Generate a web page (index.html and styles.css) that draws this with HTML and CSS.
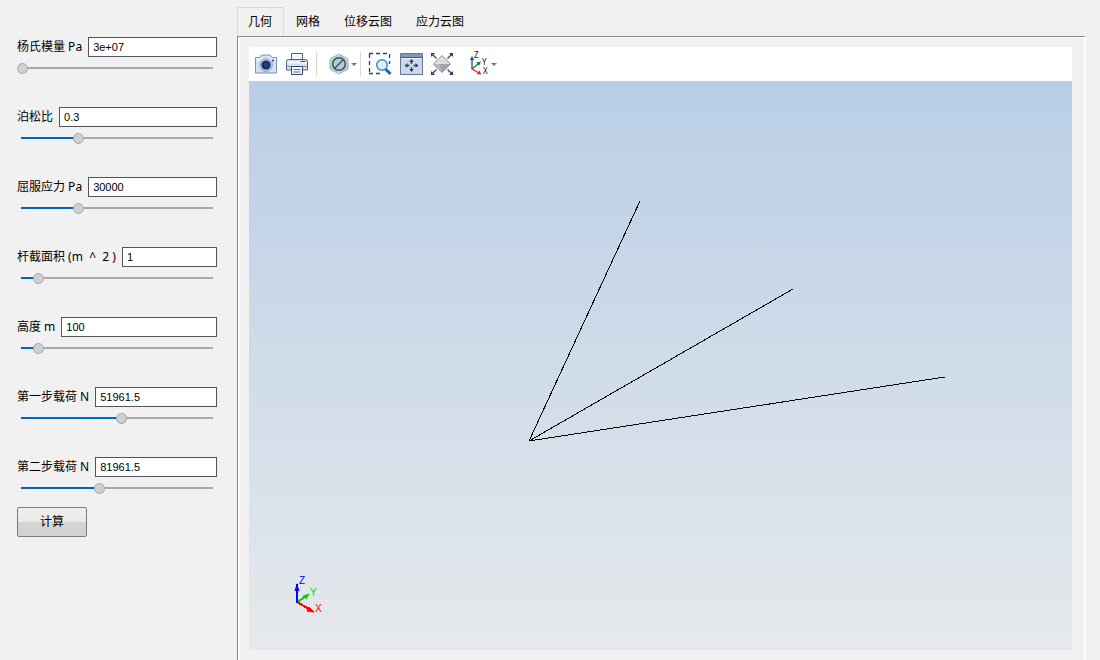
FILE: index.html
```html
<!DOCTYPE html>
<html lang="zh-CN">
<head>
<meta charset="utf-8">
<title>几何</title>
<link rel="stylesheet" href="styles.css">
</head>
<body>
<div class="app">
  <form class="params">
    <div class="field">
      <div class="field-row"><label for="young">杨氏模量 Pa</label><input class="value" id="young" type="text" value="3e+07"></div>
      <input class="slider" type="range" step="any" value="0" style="--fill: 0%" aria-label="杨氏模量">
    </div>
    <div class="field">
      <div class="field-row"><label for="poisson">泊松比</label><input class="value" id="poisson" type="text" value="0.3"></div>
      <input class="slider" type="range" step="any" value="29.6" style="--fill: 30%" aria-label="泊松比">
    </div>
    <div class="field">
      <div class="field-row"><label for="yield">屈服应力 Pa</label><input class="value" id="yield" type="text" value="30000"></div>
      <input class="slider" type="range" step="any" value="29.6" style="--fill: 30%" aria-label="屈服应力">
    </div>
    <div class="field">
      <div class="field-row"><label for="area">杆截面积 (m&nbsp; ^&nbsp; 2 )</label><input class="value" id="area" type="text" value="1"></div>
      <input class="slider" type="range" step="any" value="8.5" style="--fill: 9%" aria-label="杆截面积">
    </div>
    <div class="field">
      <div class="field-row"><label for="height">高度 m</label><input class="value" id="height" type="text" value="100"></div>
      <input class="slider" type="range" step="any" value="8.5" style="--fill: 9%" aria-label="高度">
    </div>
    <div class="field">
      <div class="field-row"><label for="load1">第一步载荷 N</label><input class="value" id="load1" type="text" value="51961.5"></div>
      <input class="slider" type="range" step="any" value="52.4" style="--fill: 52%" aria-label="第一步载荷">
    </div>
    <div class="field">
      <div class="field-row"><label for="load2">第二步载荷 N</label><input class="value" id="load2" type="text" value="81961.5"></div>
      <input class="slider" type="range" step="any" value="40.7" style="--fill: 41%" aria-label="第二步载荷">
    </div>
    <button class="compute" type="button">计算</button>
  </form>

  <main class="main">
    <div class="tabs" role="tablist">
      <button class="tab active" type="button" role="tab" aria-selected="true">几何</button>
      <button class="tab" type="button" role="tab" aria-selected="false">网格</button>
      <button class="tab" type="button" role="tab" aria-selected="false">位移云图</button>
      <button class="tab" type="button" role="tab" aria-selected="false">应力云图</button>
    </div>
    <section class="pane">
      <div class="toolbar">
        <button class="tool" type="button" aria-label="截图">
          <svg width="24" height="24" viewBox="0 0 24 24">
            <path d="M1.500 5.500h4l2-2.500h8.500l2 2.500h4.500v15.500h-21z" fill="#d3e1f2" stroke="#7d93b4"/>
            <path d="M2.500 6.500h19v2h-19z" fill="#eef4fb"/>
            <circle cx="12" cy="13" r="6.300" fill="#b4c6dd" stroke="#8fa3c0"/>
            <circle cx="12" cy="13" r="4.600" fill="#162f66"/>
            <circle cx="12" cy="13" r="2.300" fill="#25437f"/>
            <circle cx="19" cy="8.500" r="1" fill="#1f3a70"/>
          </svg>
        </button>
        <button class="tool" type="button" aria-label="打印">
          <svg width="24" height="24" viewBox="0 0 24 24">
            <path d="M6.500 9.500v-8h11v8" fill="#f7f9fc" stroke="#4c5f88"/>
            <path d="M1.500 9.500q0-2 2-2h17q2 0 2 2v8.500h-21z" fill="#d9e1ed" stroke="#4c5f88"/>
            <path d="M7 2h10v5H7z" fill="#f7f9fc"/>
            <path d="M2.500 9.500h19v2h-19z" fill="#f4f7fb"/>
            <path d="M1.500 14.500h21" stroke="#8090b0"/>
            <path d="M15.500 9.500h5" stroke="#31466f"/>
            <path d="M6.500 14.500h11v8h-11z" fill="#f8fafc" stroke="#31466f"/>
            <path d="M8.500 17.500h7M8.500 20h7" stroke="#536890"/>
          </svg>
        </button>
        <span class="divider"></span>
        <button class="tool menu" type="button" aria-label="显示">
          <svg width="20" height="24" viewBox="0 0 20 24">
            <path d="M10 2l9 5v10l-9 5-9-5V7z" fill="#bccfd4" stroke="#9db2b9"/>
            <path d="M10 2.500V21.500M1.500 7l8.500 5 8.500-5" fill="none" stroke="#d8e4e7"/>
            <circle cx="10" cy="12" r="6.300" fill="#b0ccd6" stroke="#3c5063" stroke-width="1.500"/>
            <path d="M5.500 16.500l9-9" stroke="#3c5063" stroke-width="1.500"/>
          </svg>
          <span class="caret"></span>
        </button>
        <span class="divider"></span>
        <button class="tool" type="button" aria-label="框选缩放">
          <svg width="24" height="24" viewBox="0 0 24 24">
            <path d="M1 1.500H22M1 21.500H12M1.500 2V22M21.500 2V12" fill="none" stroke="#2d4170" stroke-width="1.300" stroke-dasharray="4 3"/>
            <path d="M17.500 17l5 5" stroke="#1769b2" stroke-width="3"/>
            <circle cx="14" cy="13" r="5.300" fill="#d9effb" stroke="#4187bd" stroke-width="1.400"/>
            <path d="M11 12.500q.5-3 3.500-3" fill="none" stroke="#fff"/>
          </svg>
        </button>
        <button class="tool" type="button" aria-label="适应窗口">
          <svg width="24" height="24" viewBox="0 0 24 24">
            <path d="M1.500 1.500h22v21h-22z" fill="#cdd8e8" stroke="#63779f"/>
            <path d="M2 2h21v3H2z" fill="#8398bb"/>
            <path d="M2 5.500h21" stroke="#435985"/>
            <path d="M3 6.500h19" stroke="#eef3fa"/>
            <path d="M12.500 10v2M12.500 15v2M8 13.500h2.500M14.500 13.500h2.500" stroke="#263c6d" stroke-width="1.300"/>
            <path d="M12.500 7l2.300 3h-4.600zM12.500 20l2.300-3h-4.600zM5.500 13.500l3-2.300v4.600zM19.500 13.500l-3-2.300v4.600z" fill="#263c6d"/>
          </svg>
        </button>
        <button class="tool" type="button" aria-label="全部显示">
          <svg width="24" height="24" viewBox="0 0 24 24">
            <path d="M2 2l4.500 4.500M22 2l-4.500 4.500M2 22l4.500-4.500M22 22l-4.500-4.500" stroke="#263c6d" stroke-width="1.200"/>
            <path d="M1 1h4L1 5zM23 1h-4l4 4zM1 23h4l-4-4zM23 23h-4l4-4z" fill="#263c6d"/>
            <path d="M12 3.500l8.500 8.500h-17z" fill="#dcdddd"/>
            <path d="M12 20.500l8.500-8.500h-17z" fill="#a2a6a9"/>
            <path d="M12 3.500L9 12l3 8.500L3.500 12z" fill="#e9eaea" fill-opacity=".4"/>
            <path d="M12 3.500l8.500 8.500-8.500 8.500L3.500 12z" fill="none" stroke="#6b7278" stroke-width=".8"/>
          </svg>
        </button>
        <button class="tool menu view-menu" type="button" aria-label="视角">
          <svg class="axes" width="20" height="24" viewBox="0 0 20 24">
            <path d="M3 17V7" stroke="#2c50a2" stroke-width="1.400"/>
            <path d="M3 4l2.300 4H.7z" fill="#2c50a2"/>
            <path d="M3 17l6-5" stroke="#17804a" stroke-width="1.400"/>
            <path d="M12 9.500l-1.800 4.300-3-3.400z" fill="#17804a"/>
            <path d="M3 17l6 3.500" stroke="#e52730" stroke-width="1.400"/>
            <path d="M12.500 22.500l-4.700-.3 2.400-4z" fill="#e52730"/>
            <g fill="#222" font-size="8"><text x="5" y="6">Z</text><text x="13" y="13">Y</text><text x="14" y="22">X</text></g>
          </svg>
          <span class="caret"></span>
        </button>
      </div>
      <div class="viewport">
        <svg class="scene" viewBox="0 0 823 569" preserveAspectRatio="xMinYMid meet">
          <path d="M280 360L391 120M280 360L544 208M280 360L696 296" fill="none" stroke="#000" shape-rendering="crispEdges"/>
          <g stroke-width="2" shape-rendering="crispEdges">
            <path d="M48 521l8-5" stroke="#00d900"/>
            <path d="M48 521l12 7" stroke="#f00"/>
            <path d="M48 522v-19" stroke="#00f"/>
          </g>
          <path d="M60 513l-3 5-3-3z" fill="#00d900" stroke="#00d900"/>
          <path d="M65 531l-7-1 2-4z" fill="#f00" stroke="#f00"/>
          <path d="M48 502l2.500 8h-5z" fill="#00f"/>
          <g font-size="10">
            <text x="50" y="503" fill="#00f">Z</text>
            <text x="61" y="515" fill="#00d900">Y</text>
            <text x="66" y="531" fill="#f00">X</text>
          </g>
        </svg>
      </div>
    </section>
  </main>
</div>
</body>
</html>
```
FILE: styles.css
```css
* {
  box-sizing: border-box;
}

body {
  margin: 0;
  background: #f1f1f1;
  color: #000;
  font: 12px/20px "Noto Sans", "Noto Sans CJK SC", sans-serif;
}

button,
input {
  margin: 0;
  font: inherit;
  color: inherit;
}

.app {
  display: flex;
  min-height: 100vh;
}

.params {
  flex: 0 0 237px;
  min-width: 0;
  padding: 37px 20px 20px 17px;
}

.field {
  display: flex;
  flex-direction: column;
  gap: 6px;
  margin-bottom: 33px;
}

.field:last-of-type {
  margin-bottom: 13px;
}

.field-row {
  display: flex;
  gap: 6px;
  height: 20px;
}

.field-row label {
  white-space: nowrap;
}

.value {
  flex: 1;
  min-width: 0;
  height: 20px;
  padding: 0 4px;
  border: 1px solid #535458;
  background: #fff;
  font: 11px/18px "Liberation Sans", sans-serif;
}

.slider {
  appearance: none;
  width: 100%;
  height: 11px;
  background: linear-gradient(to right, #0067c0 var(--fill), #a9a9a9 var(--fill)) 4px 4px / calc(100% - 8px) 2px no-repeat;
}

.slider::-webkit-slider-thumb {
  appearance: none;
  width: 11px;
  height: 11px;
  border: 1px solid #a6a6a6;
  border-radius: 50%;
  background: #d0d0d0;
}

.compute {
  display: block;
  width: 70px;
  height: 30px;
  padding: 0;
  border: 1px solid #7c7c7c;
  border-radius: 2px;
  background: linear-gradient(#efefef, #e8e8e8 50%, #d5d5d5 50%, #d2d2d2);
}

.main {
  flex: 1;
  min-width: 0;
  display: flex;
  flex-direction: column;
  padding: 7px 14px 0 0;
}

.tabs {
  display: flex;
  height: 29px;
}

.tab {
  padding: 0 12px;
  border: 0;
  background: none;
}

.tab.active {
  padding: 0 11px 0 10px;
  border: 1px solid #d9d9d9;
  border-bottom: 0;
}

.pane {
  flex: 1;
  display: flex;
  flex-direction: column;
  padding: 10px 12px 10px 11px;
  border-top: 1px solid #85858f;
  border-left: 1px solid #85858f;
  border-right: 2px solid #fff;
  box-shadow: inset 2px 1px #fcfcfc;
}

.toolbar {
  display: flex;
  align-items: center;
  gap: 7px;
  height: 34px;
  padding: 0 5px;
  background: #fff;
}

.tool {
  display: flex;
  align-items: center;
  padding: 0;
  border: 0;
  background: none;
}

.tool svg {
  display: block;
}

.menu {
  gap: 2px;
  margin: 0 -4px 0 5px;
}

.view-menu {
  margin-left: 8px;
}

.axes {
  overflow: visible;
  font-family: "Noto Sans", sans-serif;
}

.caret {
  border: 3px solid transparent;
  border-top-color: #777;
  border-bottom: 0;
}

.divider {
  width: 1px;
  height: 24px;
  background: #d4d4d4;
}

.viewport {
  flex: 1;
  display: flex;
  background: linear-gradient(#b9cee6, #e6e9ec);
}

.scene {
  width: 100%;
  height: 100%;
  font-family: "Liberation Sans", sans-serif;
}
```
